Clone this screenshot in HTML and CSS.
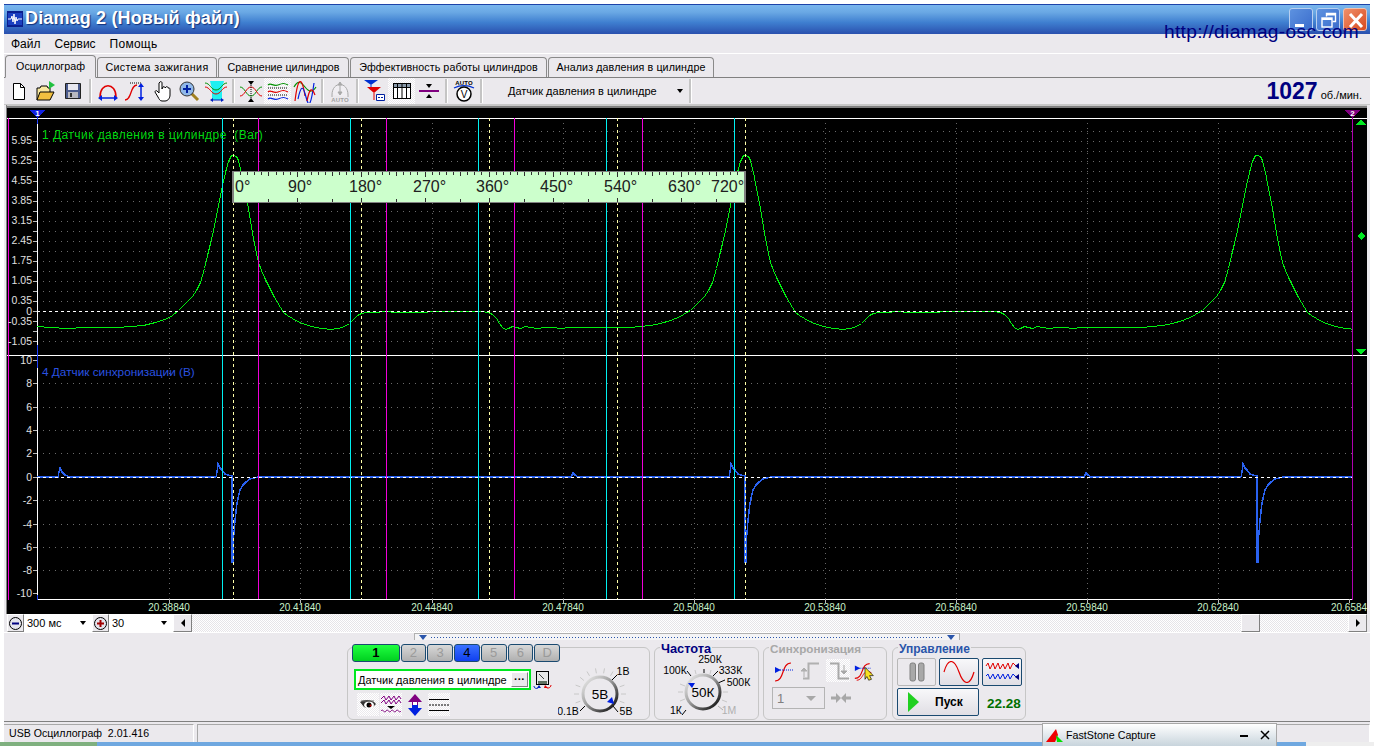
FILE: index.html
```html
<!DOCTYPE html>
<html lang="ru">
<head>
<meta charset="utf-8">
<title>Diamag 2</title>
<link rel="stylesheet" href="styles.css">
</head>
<body>
<div class="screen">
  <div class="window">
    <header class="titlebar">
      <svg class="app-icon" width="16" height="16" viewBox="0 0 16 16"><rect width="16" height="16" fill="#0a1f8f"/><rect x="1" y="2" width="14" height="12" fill="#1b3fc0"/><path d="M1 8h3l1-3 1 6 1-8 1 10 1-7 1 4 1-2h4" fill="none" stroke="#fff"/></svg>
      <span class="title-text">Diamag 2 (Новый файл)</span>
      <div class="win-buttons">
        <div class="win-btn"><svg width="24" height="23" viewBox="0 0 24 23"><rect x="5" y="15" width="9" height="3" fill="#fff"/></svg></div>
        <div class="win-btn"><svg width="24" height="23" viewBox="0 0 24 23"><path d="M9.5 7.5V4.5h9v8h-3" fill="none" stroke="#fff" stroke-width="1.4"/><path d="M9 5.5h10" stroke="#fff" stroke-width="2"/><rect x="5" y="9" width="10" height="9" fill="none" stroke="#fff" stroke-width="1.4"/><path d="M5 10h10" stroke="#fff" stroke-width="2"/></svg></div>
        <div class="win-btn win-close"><svg width="24" height="23" viewBox="0 0 24 23"><path d="M6 5l12 13M18 5L6 18" stroke="#fff" stroke-width="3"/></svg></div>
      </div>
    </header>
    <a class="site-link">http://diamag-osc.com</a>

    <nav class="menu"><span>Файл</span><span>Сервис</span><span>Помощь</span></nav>

    <div class="tabs">
      <div class="tab active t1">Осциллограф</div>
      <div class="tab t2">Система зажигания</div>
      <div class="tab t3">Сравнение цилиндров</div>
      <div class="tab t4">Эффективность работы цилиндров</div>
      <div class="tab t5">Анализ давления в цилиндре</div>
    </div>

    <div class="toolbar">
      <div class="tb"><svg width="22" height="22" viewBox="0 0 22 22"><path d="M5.500 3.500h7l4 4v12h-11z" fill="#fff" stroke="#000"/><path d="M12.500 3.500v4h4" fill="none" stroke="#000"/></svg></div>
      <div class="tb"><svg width="24" height="24" viewBox="0 0 24 24"><path d="M3 21V9h3l1-2h6l1 2h2v4" fill="#f8e8a0" stroke="#000"/><path d="M3 21l3-8h14l-4 8z" fill="#f0c040" stroke="#000"/><path d="M15 2l6 4-6 4z" fill="#20c040"/></svg></div>
      <div class="tb"><svg width="22" height="22" viewBox="0 0 22 22"><path d="M3.500 3.500h15v15h-15z" fill="#4a5a8c" stroke="#222"/><rect x="6" y="4" width="10" height="6" fill="#e8e8f0"/><rect x="6" y="12" width="10" height="6" fill="#b8b8c0"/><rect x="8" y="13" width="2" height="4" fill="#333"/></svg></div>
      <i class="sep"></i>
      <div class="tb"><svg width="24" height="24" viewBox="0 0 24 24"><path d="M4 18C4 3 20 3 20 18" fill="none" stroke="#e00000" stroke-width="1.500"/><path d="M5 19h14" stroke="#0020e0" stroke-width="1.500"/><path d="M2 19l4-3v6zM22 19l-4-3v6z" fill="#0020e0"/></svg></div>
      <div class="tb"><svg width="24" height="24" viewBox="0 0 24 24"><path d="M2 21c7 0 5-15 12-15" fill="none" stroke="#e00000" stroke-width="1.300"/><path d="M7 4h12" stroke="#000" stroke-dasharray="1 1"/><path d="M18 7v12" stroke="#0020e0" stroke-width="1.500"/><path d="M18 4l-3 4h6zM18 22l-3-4h6z" fill="#0020e0"/></svg></div>
      <div class="tb"><svg width="22" height="24" viewBox="0 0 22 24"><path d="M9 3c1-1 2 0 2 1v6l1-2c1-1 2 0 2 1l1-1c1-1 2 0 2 1l1 0c1 0 1 1 1 2v5c0 3-2 6-5 6h-3c-2 0-3-2-4-4l-3-5c0-1 1-2 2-1l2 2V4z" fill="#fff" stroke="#000"/></svg></div>
      <div class="tb"><svg width="24" height="24" viewBox="0 0 24 24"><path d="M14 14l7 7" stroke="#a08020" stroke-width="3"/><circle cx="10" cy="10" r="7" fill="#90b8e8" stroke="#333"/><path d="M6 10h8M10 6v8" stroke="#0020a0" stroke-width="2"/></svg></div>
      <div class="tb"><svg width="24" height="24" viewBox="0 0 24 24"><path d="M6 2h14l-2 8v11H8V10z" fill="#20f0f0"/><path d="M1 4c5 0 6 7 11 7s6-7 11-7" fill="none" stroke="#009000"/><path d="M1 8c5 0 6 7 11 7s6-7 11-7" fill="none" stroke="#e00000"/><path d="M8 21h10" stroke="#0020c0"/><path d="M6 21l3-2v4zM20 21l-3-2v4z" fill="#0020c0"/></svg></div>
      <i class="sep"></i>
      <div class="tb"><svg width="24" height="24" viewBox="0 0 24 24"><path d="M1 8c5 0 6 9 11 9s6-9 11-9" fill="none" stroke="#009000"/><path d="M1 17c5 0 6-9 11-9s6 9 11 9" fill="none" stroke="#e00000"/><path d="M12 6L9 2h6zM12 19l-3 4h6z" fill="#000"/><path d="M12 6v13" stroke="#000" stroke-dasharray="1 1"/></svg></div>
      <div class="tb pressed"><svg width="24" height="24" viewBox="0 0 24 24"><path d="M2 6c3-3 5 2 10 0s6-2 10 0" fill="none" stroke="#009000" stroke-width="1.200"/><path d="M2 9h20M2 16h20" stroke="#000" stroke-dasharray="1 1"/><path d="M2 13c3-3 5 2 10 0s6-2 10 0" fill="none" stroke="#e00000" stroke-width="1.200"/><path d="M2 20c3-3 5 2 10 0s6-2 10 0" fill="none" stroke="#0020e0" stroke-width="1.200"/></svg></div>
      <div class="tb"><svg width="24" height="24" viewBox="0 0 24 24"><path d="M1 8c4-7 7-5 11 0s7 6 11 0" fill="none" stroke="#009000" stroke-width="1.200"/><path d="M2 22c3-25 7-25 10-5" fill="none" stroke="#e00000" stroke-width="1.200"/><path d="M5 20c3-14 5-14 8-2s5 8 8-14" fill="none" stroke="#0020e0" stroke-width="1.200"/><path d="M14 22c2-10 4-16 8-6" fill="none" stroke="#e00000" stroke-width="1.200"/></svg></div>
      <i class="sep"></i>
      <div class="tb"><svg width="24" height="24" viewBox="0 0 24 24"><path d="M4 16C4 2 20 2 20 16v2M4 16v2" fill="#f0eef2" stroke="#a8a8a8"/><path d="M12 5v9M12 3l-2 3h4zM12 16l-2-3h4z" fill="#a8a8a8" stroke="#a8a8a8"/><text class="ico-auto-gray" x="12" y="23">AUTO</text></svg></div>
      <i class="sep"></i>
      <div class="tb"><svg width="24" height="24" viewBox="0 0 24 24"><path d="M1 1h14l-7 5z" fill="#0030d0"/><path d="M8 6v5" stroke="#0030d0"/><path d="M4 8h14l-7 6z" fill="#e00000"/><path d="M11 14v7" stroke="#e00000"/><path d="M13.500 15.500h8v6h-8z" fill="#fff" stroke="#0020a0"/><path d="M15 18.500h5" stroke="#0020a0" stroke-dasharray="2 1"/></svg></div>
      <div class="tb pressed"><svg width="22" height="20" viewBox="0 0 22 20"><rect x="2.500" y="2.500" width="17" height="15" fill="#fff" stroke="#000"/><rect x="2.500" y="2.500" width="17" height="4" fill="#8898a8" stroke="#000"/><path d="M6.500 3v14M11 3v14M15.500 3v14" stroke="#000"/></svg></div>
      <div class="tb"><svg width="24" height="22" viewBox="0 0 24 22"><path d="M2 11h20" stroke="#800080" stroke-width="2"/><path d="M12 4l-3 4h6z" fill="#000" transform="rotate(180 12 6)"/><path d="M12 18l-3-4h6z" fill="#000" transform="rotate(180 12 16)"/></svg></div>
      <i class="sep"></i>
      <div class="tb"><svg width="24" height="24" viewBox="0 0 24 24"><text class="ico-auto" x="12" y="6">AUTO</text><path d="M2 9c6-3 14-3 20 0" fill="none" stroke="#0030d0" stroke-width="1.300"/><circle cx="12" cy="15" r="7" fill="#fff" stroke="#000" stroke-width="1.500"/><text class="ico-v" x="12" y="18.500">V</text></svg></div>
      <i class="sep"></i>
      <div class="tb-combo"><span>Датчик давления в цилиндре</span><b class="arrow"></b></div>
      <i class="sep"></i>
      <div class="rpm"><b>1027</b><span>об./мин.</span></div>
    </div>

    <div class="scope">
      <svg class="plot" width="1360" height="506" viewBox="7 108 1360 506">
        <defs>
          <clipPath id="plot-clip"><rect x="37" y="118" width="1315" height="238"/></clipPath>
          <clipPath id="plot-clip2"><rect x="37" y="356" width="1315" height="244"/></clipPath>
          <polyline id="press" class="trace-green" points="233.500,155.500 236.500,156.500 238.500,160.500 241.500,172.500 244.500,188.500 247.500,203.500 250.500,220.500 253.500,238.500 256.500,253.500 258.500,262.500 261.500,270.500 264.500,277.500 267.500,283.500 270.500,289.500 274.500,297.500 277.500,302.500 280.500,307.500 283.500,312.500 287.500,315.500 292.500,318.500 297.500,321.500 302.500,323.500 308.500,325.500 315.500,327.500 322.500,328.500 330.500,329.500 338.500,328.500 344.500,326.500 349.500,323.500 353.500,319.500 357.500,315.500 361.500,313.500 366.500,312.500 375.500,312.500 385.500,311.500 395.500,312.500 405.500,312.500 420.500,312.500 435.500,311.500 450.500,311.500 465.500,311.500 480.500,311.500 488.500,312.500 492.500,314.500 496.500,318.500 499.500,323.500 502.500,327.500 505.500,329.500 508.500,328.500 512.500,326.500 516.500,327.500 520.500,328.500 525.500,326.500 530.500,327.500 537.500,328.500 545.500,327.500 552.500,327.500 560.500,328.500 570.500,327.500 585.500,327.500 600.500,327.500 615.500,327.500 630.500,327.500 640.500,326.500 650.500,325.500 660.500,323.500 670.500,320.500 680.500,316.500 686.500,312.500 690.500,310.500 695.500,305.500 700.500,300.500 704.500,296.500 708.500,290.500 712.500,282.500 716.500,268.500 719.500,255.500 722.500,243.500 725.500,230.500 728.500,215.500 731.500,200.500 734.500,185.500 737.500,172.500 740.500,161.500 743.500,155.500 745.500,155.500"/>
          <polyline id="sync" class="trace-blue" points="216,477 217,472 218,464 220,468 222,470 225,474 228,475 232,476 232,562 233,562 233,540 234,533 235,520 237,503 240,490 243,485 246,482 250,479 258,477 400,477"/>
        </defs>

        <g class="grid-h">
          <path d="M37 131H1352M37 141H1352M37 151H1352M37 161H1352M37 171H1352M37 181H1352M37 191H1352M37 201H1352M37 211H1352M37 221H1352M37 231H1352M37 241H1352M37 251H1352M37 261H1352M37 271H1352M37 281H1352M37 291H1352M37 301H1352M37 321H1352M37 331H1352M37 341H1352"/>
          <path d="M37 383.500H1352M37 407H1352M37 430H1352M37 453.500H1352M37 500.500H1352M37 524H1352M37 547H1352M37 570.500H1352"/>
        </g>
        <path class="grid-v" d="M169 118V599M300 118V599M432 118V599M563 118V599M694 118V599M825 118V599M956 118V599M1087 118V599M1218 118V599"/>

        <path class="hline" d="M7 118.500H1367M7 355.500H1367M37 599.500H1352"/>
        <path class="axis" d="M37.500 118V599"/>
        <path class="axis-blue" d="M37.500 345V368M37.500 595V600M37.500 112V124"/>
        <path class="ticks" d="M33 141h4M33 151h4M33 161h4M33 171h4M33 181h4M33 191h4M33 201h4M33 211h4M33 221h4M33 231h4M33 241h4M33 251h4M33 261h4M33 271h4M33 281h4M33 291h4M33 301h4M33 311h4M33 321h4M33 331h4M33 341h4M33 360h4M33 383h4M33 407h4M33 430h4M33 453h4M33 477h4M33 500h4M33 524h4M33 547h4M33 570h4M33 593h4"/>
        <path class="ticks" d="M169 599v4M300 599v4M432 599v4M563 599v4M694 599v4M825 599v4M956 599v4M1087 599v4M1218 599v4M1349 599v4"/>

        <g clip-path="url(#plot-clip)">
          <polyline class="trace-green" points="37.500,326.500 50.500,327.500 67.500,328.500 85.500,327.500 117.500,327.500 130.500,326.500 143.500,325.500 155.500,322.500 167.500,318.500 172.500,315.500 178.500,310.500 183.500,305.500 188.500,300.500 192.500,296.500 196.500,290.500 200.500,282.500 204.500,268.500 207.500,255.500 210.500,243.500 213.500,230.500 216.500,215.500 219.500,200.500 222.500,185.500 225.500,172.500 228.500,161.500 231.500,155.500 233.500,155.500"/>
          <use href="#press"/>
          <use href="#press" x="512"/>
          <use href="#press" x="1024"/>
        </g>
        <g clip-path="url(#plot-clip2)">
          <polyline class="trace-blue" points="37,477 58,477 59,472 60,468 62,472 65,475 70,477 216,477"/>
          <use href="#sync"/>
          <polyline class="trace-blue" points="400,477 571,477 573,473 575,475 578,477 729,477"/>
          <use href="#sync" x="513"/>
          <polyline class="trace-blue" points="913,477 1084,477 1086,473 1088,475 1091,477 1241,477"/>
          <use href="#sync" x="1025"/>
        </g>

        <path class="zero" d="M37 311.500H1352M37 477.500H1352"/>

        <path class="line-cyan" d="M222.500 118V599M350.500 118V599M478.500 118V599M606.500 118V599M734.500 118V599"/>
        <path class="line-dash" d="M233.500 118V599M361.500 118V599M489.500 118V599M617.500 118V599M745.500 118V599"/>
        <path class="line-mag" d="M258.500 118V599M386.500 118V599M514.500 118V599M642.500 118V599M8.500 118V600"/>
        <path class="line-purple" d="M1352.500 118V600"/>

        <path class="tri-blue" d="M30 110h15l-7.500 8z"/>
        <text class="tri-num" x="37.500" y="116">1</text>
        <path class="tri-purple" d="M1345 110h15l-7.500 8z"/>
        <text class="tri-num" x="1352.500" y="116">2</text>
        <path class="tri-green" d="M1361 119l5 6h-10zM1361 232l4 4-4 4-4-4zM1356 349h10l-5 6z"/>

        <text class="lbl-green" x="42" y="139">1 Датчик давления в цилиндре  (Ваr)</text>
        <text class="lbl-blue" x="42" y="376">4 Датчик синхронизации (В)</text>

        <g class="ylabels">
          <text x="32" y="144">5.95</text><text x="32" y="164">5.25</text><text x="32" y="184">4.55</text><text x="32" y="204">3.85</text><text x="32" y="224">3.15</text><text x="32" y="244">2.45</text><text x="32" y="264">1.75</text><text x="32" y="284">1.05</text><text x="32" y="304">0.35</text><text x="32" y="315">0</text><text x="32" y="325">-0.35</text><text x="32" y="345">-1.05</text>
          <text x="32" y="364">10</text><text x="32" y="387">8</text><text x="32" y="411">6</text><text x="32" y="434">4</text><text x="32" y="457">2</text><text x="32" y="481">0</text><text x="32" y="504">-2</text><text x="32" y="528">-4</text><text x="32" y="551">-6</text><text x="32" y="574">-8</text><text x="32" y="597">-10</text>
        </g>
        <g class="xlabels">
          <text x="169" y="611">20.38840</text><text x="300" y="611">20.41840</text><text x="432" y="611">20.44840</text><text x="563" y="611">20.47840</text><text x="694" y="611">20.50840</text><text x="825" y="611">20.53840</text><text x="956" y="611">20.56840</text><text x="1087" y="611">20.59840</text><text x="1218" y="611">20.62840</text><text x="1349" y="611">20.6584</text>
        </g>

        <g class="ruler">
          <rect class="ruler-bg" x="233" y="171.500" width="512" height="31"/>
          <path class="ruler-ticks" d="M240 172v3M247 172v3M254 172v3M261 172v3M276 172v3M283 172v3M290 172v3M304 172v3M311 172v3M318 172v3M325 172v3M339 172v3M346 172v3M353 172v3M368 172v3M375 172v3M382 172v3M389 172v3M403 172v3M410 172v3M417 172v3M432 172v3M439 172v3M446 172v3M453 172v3M467 172v3M474 172v3M481 172v3M496 172v3M503 172v3M510 172v3M517 172v3M531 172v3M538 172v3M545 172v3M560 172v3M567 172v3M574 172v3M581 172v3M595 172v3M602 172v3M609 172v3M624 172v3M631 172v3M638 172v3M645 172v3M659 172v3M666 172v3M673 172v3M688 172v3M695 172v3M702 172v3M709 172v3M723 172v3M730 172v3M737 172v3"/>
          <path class="ruler-ticks" d="M297 172v5M361 172v5M425 172v5M489 172v5M553 172v5M617 172v5M681 172v5M268 172v4M332 172v4M396 172v4M460 172v4M524 172v4M588 172v4M652 172v4M716 172v4"/>
          <path class="ruler-ticks" d="M297 198v4M361 198v4M425 198v4M489 198v4M553 198v4M617 198v4M681 198v4M268 199v3M332 199v3M396 199v3M460 199v3M524 199v3M588 199v3M652 199v3M716 199v3"/>
          <text x="235" y="192">0°</text><text x="288" y="192">90°</text><text x="349" y="192">180°</text><text x="413" y="192">270°</text><text x="476" y="192">360°</text><text x="540" y="192">450°</text><text x="604" y="192">540°</text><text x="668" y="192">630°</text><text x="711" y="192">720°</text>
        </g>
      </svg>
    </div>

    <div class="scrollrow">
      <div class="zoom-btn"><svg width="15" height="15" viewBox="0 0 15 15"><circle cx="7.500" cy="7.500" r="6" fill="#e4e4ec" stroke="#000"/><path d="M4 7.500h7" stroke="#000080" stroke-width="2"/></svg></div>
      <div class="zoom-combo z1"><span>300 мс</span><b class="arrow"></b></div>
      <div class="zoom-btn"><svg width="15" height="15" viewBox="0 0 15 15"><circle cx="7.500" cy="7.500" r="6" fill="#e4e4ec" stroke="#000"/><path d="M4 7.500h7M7.500 4v7" stroke="#a00000" stroke-width="2"/></svg></div>
      <div class="zoom-combo z2"><span>30</span><b class="arrow"></b></div>
      <div class="sb-btn"><b class="ar-left"></b></div>
      <div class="sb-track"><div class="sb-thumb"></div></div>
      <div class="sb-btn"><b class="ar-right"></b></div>
    </div>

    <div class="controls">
      <div class="splitter"><b class="split-tri"></b><i class="split-dots"></i><b class="split-tri"></b></div>

      <section class="group g-chan">
        <div class="chan-col">
          <div class="chan-row">
            <div class="chan on wide">1</div><div class="chan">2</div><div class="chan">3</div><div class="chan blue">4</div><div class="chan">5</div><div class="chan">6</div><div class="chan">D</div>
          </div>
          <div class="sensor-row">
            <div class="sensor"><span>Датчик давления в цилиндре</span><div class="sensor-btn">···</div></div>
            <svg width="20" height="20" viewBox="0 0 20 20"><rect x="3.500" y="1.500" width="12" height="13" fill="#e8e8e8" stroke="#000"/><rect x="5" y="11" width="9" height="3" fill="#607060"/><path d="M6 4l5 5" stroke="#444"/><path d="M1 16c0 3 4 3 5 1" fill="none" stroke="#0020c0"/><path d="M6 15l-2 3 4 0z" fill="#0020c0"/><path d="M18 15c0 3-4 4-5 2" fill="none" stroke="#e00000"/><path d="M12 15l-1 3 4 0z" fill="#e00000"/></svg>
          </div>
          <div class="tools-row">
            <div class="tool checker"><svg width="20" height="18" viewBox="0 0 20 18"><path d="M2 6c4-3 12-3 16 2-3 4-9 5-12 3z" fill="#333"/><ellipse cx="11" cy="9" rx="5" ry="3.500" fill="#fff"/><circle cx="11" cy="9" r="2.500" fill="#000"/><path d="M3 5h13" stroke="#666"/><circle cx="12.500" cy="9.500" r="1" fill="#c00000"/></svg></div>
            <div class="tool checker"><svg width="22" height="22" viewBox="0 0 22 22"><path d="M1 5l3-3 2 4 3-4 2 4 3-4 2 4 3-4 2 3" fill="none" stroke="#800080"/><path d="M1 9l3-3 2 4 3-4 2 4 3-4 2 4 3-4 2 3" fill="none" stroke="#800080"/><path d="M7 12h8l-4 3z" fill="#000"/><path d="M1 17c2-3 3 3 5 0s3 3 5 0 3 3 5 0 3 3 5 0" fill="none" stroke="#800080"/></svg></div>
            <div class="tool plain"><svg width="18" height="22" viewBox="0 0 18 22"><path d="M9 0l7 8h-4v3H6V8H2z" fill="#800080"/><path d="M9 22l7-8h-4v-3H6v3H2z" fill="#0020e0"/><path d="M7 8h4v3H7z" fill="#fff"/></svg></div>
            <div class="tool checker"><svg width="22" height="20" viewBox="0 0 22 20"><path d="M1 4.500h20M1 15.500h20" stroke="#000"/><path d="M1 10h20" stroke="#000" stroke-dasharray="2 1"/></svg></div>
          </div>
        </div>
        <svg class="knob" width="88" height="68" viewBox="558 656 88 68">
          <defs><linearGradient id="ring" x1="0" y1="0" x2="1" y2="1"><stop offset="0" stop-color="#f0f0f0"/><stop offset="0.45" stop-color="#a0a0a0"/><stop offset="1" stop-color="#000"/></linearGradient></defs>
          <path class="k-tick" d="M579 695h-5M580.300 687.800l-4.700-1.700M583.900 681.500l-3.800-3.200M589.500 676.800l-2.500-4.300M596.400 674.300l-.9-4.900M603.600 674.300l.9-4.900M610.500 676.800l2.500-4.300M619.700 687.800l4.700-1.700M621 695h5M619.700 702.200l4.700 1.700M580.300 702.200l-4.700 1.700"/>
          <path class="k-black" d="M612 681l5-5M613 707l5 6M585 707l-5 5"/>
          <circle class="k-ring" cx="600" cy="695" r="17"/>
          <path class="k-ind" d="M607 703l5-5 2 7z"/>
          <text class="k-big" x="600" y="700">5В</text>
          <text class="k-sm" x="623" y="676">1В</text>
          <text class="k-sm" x="626" y="716">5В</text>
          <text class="k-sm" x="568" y="716">0.1В</text>
        </svg>
      </section>

      <section class="group g-freq">
        <h3 class="legend l-navy">Частота</h3>
        <svg class="knob" width="103" height="70" viewBox="655 651 103 70">
          <path class="k-tick" d="M680 686l5 2M678 694h5M680 703l5-2M723 694h5M722 702l5 2M696 676l-1-4M710 676l1-4"/>
          <path class="k-black" d="M687 673l4 5M704 671v4M718 673l-5 5M725 682l-7 3M682 717l4-5"/>
          <path class="k-gray" d="M718 708l5 4"/>
          <circle class="k-ring" cx="703" cy="694" r="17"/>
          <path class="k-ind" d="M688 685h7l-3 5z"/>
          <text class="k-big" x="703" y="699">50К</text>
          <text class="k-sm" x="710" y="665">250К</text>
          <text class="k-sm" x="675" y="676">100К</text>
          <text class="k-sm" x="730.500" y="676">333К</text>
          <text class="k-sm" x="738.500" y="688">500К</text>
          <text class="k-sm" x="676" y="716">1К</text>
          <text class="k-sm k-dis" x="729" y="716">1М</text>
        </svg>
      </section>

      <section class="group g-sync">
        <h3 class="legend l-gray">Синхронизация</h3>
        <div class="sync-col">
          <div class="sync-row">
            <div class="sync-ico"><svg width="24" height="24" viewBox="0 0 24 24"><path d="M3 22c10 0 6-18 16-18" fill="none" stroke="#e00000" stroke-width="1.200"/><path d="M4 11h18" stroke="#0020e0" stroke-dasharray="1 1"/><path d="M3 8l6 3-6 3z" fill="#0020e0"/></svg></div>
            <div class="sync-ico"><svg width="24" height="24" viewBox="0 0 24 24"><path d="M4 19.500h5.500V4.500H20" fill="none" stroke="#b0b0b0" stroke-width="2"/><path d="M5 9l-3 3h6zM5 12v6" fill="#b0b0b0" stroke="#b0b0b0"/></svg></div>
            <div class="sync-ico checker"><svg width="24" height="24" viewBox="0 0 24 24"><path d="M4 4.500h8.500V19.500H23" fill="none" stroke="#a8a8a8" stroke-width="2"/><path d="M18 15l-3-3h6zM18 12V6" fill="#a8a8a8" stroke="#a8a8a8"/></svg></div>
            <div class="sync-ico"><svg width="26" height="24" viewBox="0 0 26 24"><path d="M2 20c10 0 6-16 16-16" fill="none" stroke="#e00000" stroke-width="1.200"/><path d="M4 22c8 0 6-14 16-8" fill="none" stroke="#e00000" stroke-width="1"/><path d="M4 9h16" stroke="#0020e0" stroke-dasharray="1 1"/><path d="M2 6l6 3-6 3z" fill="#0020e0"/><path d="M13 8l9 9-4 0 2 4-3 1-2-4-2 3z" fill="#f8e020" stroke="#000" stroke-width=".7"/></svg></div>
          </div>
          <div class="sync-row2">
            <div class="sync-combo"><span>1</span><b class="arrow gray"></b></div>
            <svg width="20" height="12" viewBox="0 0 20 12"><path d="M0 4.500h5v3H0zM15 4.500h5v3h-5z" fill="#a8a8a8"/><path d="M5 1l5 5-5 5zM15 1l-5 5 5 5z" fill="#a8a8a8"/></svg>
          </div>
        </div>
      </section>

      <section class="group g-ctrl">
        <h3 class="legend l-blue">Управление</h3>
        <div class="ctrl-grid">
          <div class="cbtn dis"><svg width="16" height="20" viewBox="0 0 16 20"><rect x="1" y="1" width="5.500" height="18" rx="2" fill="#a8a8a8" stroke="#808080"/><rect x="9.500" y="1" width="5.500" height="18" rx="2" fill="#a8a8a8" stroke="#808080"/></svg></div>
          <div class="cbtn"><svg width="32" height="22" viewBox="0 0 32 22"><path d="M1 11C5-3 11-3 16 11s11 14 15 0" fill="none" stroke="#e00000" stroke-width="1.200"/></svg></div>
          <div class="cbtn"><svg width="34" height="22" viewBox="0 0 34 22"><path d="M1 5l2-3 2 6 3-6 2 6 3-6 2 6 3-5 2 5 3-6 2 6 3-6 3 3" fill="none" stroke="#e00000"/><path d="M1 15l2-2 2 5 3-5 2 5 3-5 2 5 3-5 2 5 3-5 2 5 3-5 3 3" fill="none" stroke="#0020e0"/><path d="M34 2l-4 3 4 3zM34 13l-4 3 4 3z" fill="#000080"/></svg></div>
          <div class="cbtn start"><svg class="play" width="11" height="20" viewBox="0 0 11 20"><path d="M0 0l11 10L0 20z" fill="#20d020"/></svg><span>Пуск</span></div>
          <div class="timer">22.28</div>
        </div>
      </section>
    </div>

    <footer class="status">
      <div class="st-panel st1">USB Осциллограф&nbsp; 2.01.416</div>
      <div class="st-panel st2"></div>
    </footer>
  </div>

  <div class="taskstrip"><i class="ts-green"></i><i class="ts-blue"></i><i class="ts-end"></i></div>

  <aside class="capture">
    <svg width="17" height="13" viewBox="0 0 17 13"><path d="M0 13L10 0l2 6-3 7z" fill="#f00000"/><path d="M10 6l7 7h-6z" fill="#00e000"/></svg>
    <span class="cap-name">FastStone Capture</span>
    <svg class="cap-min" width="10" height="10" viewBox="0 0 10 10"><rect x="1" y="5" width="8" height="2" fill="#000"/></svg>
    <svg class="cap-x" width="10" height="10" viewBox="0 0 10 10"><path d="M1 1l8 8M9 1L1 9" stroke="#000" stroke-width="1.500"/></svg>
  </aside>
</div>
</body>
</html>
```

FILE: styles.css
```css
* { box-sizing: border-box; }
html, body { margin: 0; padding: 0; background: #fff; }
body { font-family: "Liberation Sans", Arial, sans-serif; font-size: 11px; color: #000; }
.screen { position: relative; width: 1374px; height: 746px; overflow: hidden; }
.window { position: relative; margin: 4px 4px 0 4px; width: 1366px; height: 738px; background: #ebe9ed; display: flex; flex-direction: column; }

.titlebar { height: 30px; flex: none; display: flex; align-items: center; padding: 0 3px 2px 3px; color: #fff; border-top: 1px solid #1d43a8;
  background: linear-gradient(#79b6ee 0%, #6aa8e4 25%, #3f7fd0 60%, #2a50ae 100%); }
.app-icon { flex: none; }
.title-text { margin-left: 2px; font-size: 18px; font-weight: 700; letter-spacing: .15px; text-shadow: 1px 1px 1px #12307a; white-space: nowrap; }
.win-buttons { margin-left: auto; display: flex; gap: 3px; margin-top: 2px; }
.win-btn { width: 24px; height: 23px; border-radius: 3px; border: 1px solid #b8cff0; background: linear-gradient(135deg, #5d92e0, #3a6ccc); }
.win-close { background: linear-gradient(135deg, #f0906a, #d84a20); border-color: #f0c0b0; }
.site-link { position: absolute; left: 1160px; top: 17px; font-size: 19.2px; letter-spacing: .3px; color: #000080; white-space: nowrap; }

.menu { height: 20px; flex: none; display: flex; gap: 14px; padding: 2px 0 0 7px; font-size: 12px; line-height: 16px; border-bottom: 1px solid #fff; }
.menu span:nth-child(3) { letter-spacing: .25px; }

.tabs { height: 24px; flex: none; display: flex; align-items: flex-end; padding: 0 0 0 1px; gap: 1px; border-bottom: 1px solid #808080; font-size: 10.7px; }
.tab { height: 20px; border: 1px solid #8a8a8a; border-bottom: 0; border-radius: 4px 4px 0 0; text-align: center; line-height: 19px; background: #ebe9ed; white-space: nowrap; }
.tab.active { height: 23px; line-height: 20px; padding-bottom: 2px; position: relative; top: 1px; border-bottom: 1px solid #ebe9ed; }
.t1 { width: 91px; }
.t2 { width: 120px; letter-spacing: .35px; }
.t3 { width: 131px; }
.t4 { width: 197px; letter-spacing: .07px; }
.t5 { width: 166px; letter-spacing: .1px; }

.toolbar { height: 27px; flex: none; display: flex; align-items: center; padding-left: 1px; border-bottom: 1px solid #c8c8c8; }
.tb { width: 27px; height: 26px; flex: none; display: flex; align-items: center; justify-content: center; }
.tb.pressed { background: repeating-conic-gradient(#fff 0 25%, #ebe9ed 0 50%) 0 0 / 2px 2px; }
.sep { width: 8px; height: 24px; flex: none; position: relative; }
.sep::before { content: ""; position: absolute; left: 3px; top: 0; bottom: 0; width: 2px; background: #c4c4c4; border-right: 1px solid #fff; }
.tb-combo { width: 201px; flex: none; height: 26px; display: flex; align-items: center; padding-left: 23px; gap: 20px; white-space: nowrap; font-size: 11px; }
.arrow { width: 0; height: 0; flex: none; border: 3.5px solid transparent; border-top: 4px solid #000; border-bottom: 0; }
.arrow.gray { border-top-color: #a8a8a8; border-left-width: 5px; border-right-width: 5px; border-top-width: 5px; }
.rpm { margin-left: auto; display: flex; align-items: baseline; gap: 3px; padding-right: 8px; }
.rpm b { font-size: 23px; color: #000080; }
.rpm span { font-size: 11px; }
.ico-auto, .ico-auto-gray { font-size: 6px; font-weight: 700; text-anchor: middle; fill: #000; letter-spacing: .2px; }
.ico-auto-gray { fill: #a0a0a0; }
.ico-v { font-size: 10px; text-anchor: middle; fill: #000; }

.scope { height: 509px; flex: none; margin: 0 3px 0 2px; padding-top: 3px; border-left: 1px solid #808080; background: linear-gradient(#c8c8c8 0 1px, #808080 1px 3px, #000 3px); }
.plot { display: block; background: #000; shape-rendering: crispEdges; }
.plot text { font-family: "Liberation Sans", Arial, sans-serif; }
.grid-h path { stroke: #6a6a6a; stroke-dasharray: 1 5; fill: none; }
.grid-v { stroke: #666; stroke-dasharray: 1 4; fill: none; }
.hline { stroke: #fff; fill: none; }
.axis { stroke: #fff; fill: none; }
.axis-blue { stroke: #2040ff; fill: none; }
.ticks { stroke: #bbb; fill: none; }
.zero { stroke: #fff; stroke-dasharray: 3 3; fill: none; }
.trace-green { fill: none; stroke: #00f010; stroke-width: 1; shape-rendering: crispEdges; }
.trace-blue { fill: none; stroke: #2a62f0; stroke-width: 1.5; shape-rendering: crispEdges; }
.line-cyan { stroke: #00f0f0; fill: none; }
.line-dash { stroke: #ffffa8; stroke-dasharray: 3 3; fill: none; }
.line-mag { stroke: #f000d8; fill: none; }
.line-purple { stroke: #b000b0; fill: none; }
.tri-blue { fill: #1020e0; }
.tri-purple { fill: #800080; }
.tri-green { fill: #00e820; }
.tri-num { fill: #fff; font-size: 8px; font-weight: 700; text-anchor: middle; }
.lbl-green { fill: #00d810; font-size: 12px; letter-spacing: .45px; white-space: pre; }
.lbl-blue { fill: #2a52e0; font-size: 11.8px; }
.ylabels text { fill: #e0e0e0; font-size: 10.5px; text-anchor: end; }
.xlabels text { fill: #c8f0c8; font-size: 10px; text-anchor: middle; }
.ruler-bg { fill: #ccffcc; stroke: #808080; stroke-width: 1.5; }
.ruler-ticks { stroke: #303030; fill: none; }
.ruler text { fill: #202020; font-size: 16px; }

.scrollrow { height: 19px; flex: none; display: flex; padding: 0 3px 1px 3px; border-bottom: 1px solid #fff; }
.zoom-btn, .sb-btn { width: 17px; height: 18px; flex: none; display: flex; align-items: center; justify-content: center; background: #ebe9ed; border: 1px solid; border-color: #fff #808080 #808080 #fff; }
.zoom-combo { height: 18px; flex: none; background: #fff; display: flex; align-items: center; justify-content: space-between; padding: 0 6px 0 3px; font-size: 11px; }
.z1 { width: 68px; }
.z2 { width: 64px; }
.sb-btn { width: 19px; }
.sb-track { flex: 1; height: 18px; position: relative; background: repeating-conic-gradient(#fff 0 25%, #e6e4e8 0 50%) 0 0 / 2px 2px; }
.sb-thumb { position: absolute; left: 1049px; top: 0; width: 19px; height: 18px; background: #ebe9ed; border: 1px solid; border-color: #fff #808080 #808080 #fff; }
.ar-left, .ar-right { width: 0; height: 0; border: 4px solid transparent; }
.ar-left { border-right-color: #000; border-left: 0; }
.ar-right { border-left-color: #000; border-right: 0; }

.controls { height: 89px; flex: none; position: relative; display: flex; justify-content: center; gap: 4px; padding: 14px 1px 0 0; border-bottom: 1px solid #808080; }
.splitter { position: absolute; left: 410px; top: 0; width: 546px; height: 7px; display: flex; align-items: center; gap: 4px; padding: 0 4px; border: 1px solid #b0b0b0; border-bottom: 0; background: #f4f4f6; }
.split-tri { width: 0; height: 0; border: 4px solid transparent; border-top: 5px solid #2a55aa; border-bottom: 0; }
.split-dots { flex: 1; height: 1px; background: repeating-linear-gradient(90deg, #2a55aa 0 1px, transparent 1px 3px); }
.group { position: relative; height: 73px; flex: none; border: 1px solid #c6c6c6; border-radius: 6px; }
.g-chan { width: 303px; display: flex; }
.g-freq { width: 105px; }
.g-sync { width: 124px; }
.g-ctrl { width: 134px; margin-left: 1px; }
.legend { position: absolute; top: -4px; left: 5px; margin: 0; padding: 0 1px; line-height: 10px; font-weight: 700; background: #ebe9ed; white-space: nowrap; }
.l-navy { color: #000080; font-size: 12.8px; }
.l-gray { color: #a8a8a8; font-size: 11.7px; }
.l-blue { color: #2a55aa; font-size: 12px; }

.chan-col { width: 212px; flex: none; display: flex; flex-direction: column; }
.chan-row { display: flex; gap: 1px; margin: -4px 0 0 4px; }
.chan { width: 26px; height: 18px; border: 1px solid #1a4a70; border-radius: 3px; text-align: center; line-height: 16px; font-size: 13px; color: #9a9a9a; background: linear-gradient(#d8d8d8, #b0b0b0); }
.chan.wide { width: 48px; }
.chan.on { color: #000; font-weight: 700; background: linear-gradient(#20ff40, #00d020); }
.chan.blue { color: #000; background: linear-gradient(#3a70ff, #1040f0); }
.sensor-row { display: flex; align-items: center; gap: 2px; margin: 7px 0 0 6px; height: 21px; }
.sensor { width: 177px; height: 21px; flex: none; border: 2px solid #00e820; background: #fff; display: flex; align-items: center; justify-content: space-between; padding: 0 1px 0 2px; white-space: nowrap; font-size: 11px; }
.sensor-btn { width: 17px; height: 15px; line-height: 12px; font-weight: 700; text-align: center; background: #ebe9ed; border: 1px solid; border-color: #fff #808080 #808080 #fff; }
.tools-row { display: flex; gap: 1px; margin: 3px 0 0 9px; height: 23px; }
.tool { width: 22px; height: 23px; display: flex; align-items: center; justify-content: center; }
.tool.plain { margin: 0 2px; width: 20px; }
.checker { background: repeating-conic-gradient(#fff 0 25%, #ebe9ed 0 50%) 0 0 / 2px 2px; }
.knob { display: block; flex: none; }
.g-chan .knob { margin: 7px 0 0 -2px; }
.g-freq .knob { margin-top: 1px; }
.k-tick { stroke: #c8c8c8; fill: none; }
.k-black { stroke: #000; fill: none; }
.k-gray { stroke: #b0b0b0; fill: none; }
.k-ring { fill: #ebe9ed; stroke: url(#ring); stroke-width: 3; }
.k-ind { fill: #0020e0; }
.k-big { font-size: 13.5px; text-anchor: middle; fill: #000; font-family: "Liberation Sans", Arial, sans-serif; }
.k-sm { font-size: 10.5px; text-anchor: middle; fill: #000; font-family: "Liberation Sans", Arial, sans-serif; }
.k-dis { fill: #b0b0b0; }

.sync-col { padding: 11px 0 0 8px; }
.sync-row { display: flex; gap: 3px; }
.sync-ico { width: 24px; height: 23px; display: flex; align-items: center; justify-content: center; }
.sync-row2 { display: flex; align-items: center; gap: 6px; margin-top: 5px; }
.sync-combo { width: 53px; height: 22px; border: 1px solid #b4b4b4; display: flex; align-items: center; justify-content: space-between; padding: 0 8px 0 4px; color: #808080; font-size: 13px; }

.ctrl-grid { display: grid; grid-template-columns: 39px 40px 40px; grid-template-rows: 28px 28px; gap: 2px 3px; padding: 10px 0 0 4px; }
.cbtn { display: flex; align-items: center; justify-content: center; border: 1px solid #1a4a70; border-radius: 2px; background: linear-gradient(#f8f8fa, #e0dee4); }
.cbtn.dis { border-color: #b8b8b8; background: #ebe9ed; }
.start { grid-column: 1 / span 2; justify-content: flex-start; padding-left: 10px; gap: 16px; font-weight: 700; font-size: 12px; }
.timer { padding-left: 4px; text-align: center; line-height: 32px; color: #007000; font-size: 13.5px; font-weight: 700; }

.status { height: 20px; flex: none; display: flex; gap: 3px; padding-top: 2px; }
.st-panel { border-top: 1px solid #a8a8a8; border-right: 1px solid #fff; white-space: nowrap; line-height: 16px; padding-left: 5px; font-size: 10.6px; }
.st1 { width: 190px; }
.st2 { flex: 1; border-left: 1px solid #a8a8a8; }

.taskstrip { display: flex; height: 4px; }
.ts-green { width: 97px; background: #7fb07f; }
.ts-blue { flex: 1; background: #6fa8e0; }
.ts-end { width: 68px; background: #eeeeee; }

.capture { position: absolute; left: 1042px; top: 723px; width: 235px; height: 23px; display: flex; align-items: center; gap: 3px; padding: 0 6px 0 3px; border: 1px solid #a8a8a8; border-bottom: 0; background: linear-gradient(#fff, #c8d4dc); }
.cap-name { font-size: 10.7px; }
.cap-min { margin-left: auto; }
.cap-x { margin-left: 8px; }
```
